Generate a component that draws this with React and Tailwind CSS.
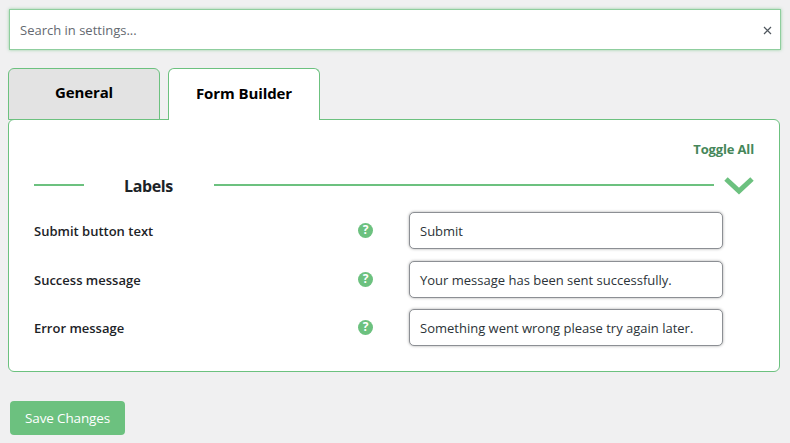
import React from "react";

const fontFamily = "font-['Open_Sans','Noto_Sans',sans-serif]";

const rows = [
  { label: "Submit button text", value: "Submit", gap: "mb-3" },
  { label: "Success message", value: "Your message has been sent successfully.", gap: "mb-[11px]" },
  { label: "Error message", value: "Something went wrong please try again later.", gap: "" },
];

const HelpIcon = () => (
  <span className="flex h-[15px] w-[15px] items-center justify-center rounded-full bg-[#6cc17f] text-[12px] font-bold leading-none text-white">
    ?
  </span>
);

const SettingRow = ({ label, value, gap }) => (
  <div className={`flex h-[37px] items-center ${gap}`}>
    <div className="w-[324px] pt-[4px] text-[13px] font-semibold text-[#1d2327]">{label}</div>
    <HelpIcon />
    <div className="ml-[36px] flex h-[37px] w-[314px] items-center rounded-[5px] border border-[#8c8f94] bg-white px-[10px] pt-[4px] text-[13px] text-[#2c3338] shadow-[0_0_3px_rgba(0,0,0,0.35)]">
      {value}
    </div>
  </div>
);

export default function App() {
  return (
    <div className={`h-[443px] w-[790px] overflow-hidden bg-[#f0f0f1] pl-2 pr-[10px] pt-[9px] ${fontFamily}`}>
      {/* Search */}
      <div className="ml-px flex h-[41px] w-[772px] items-center justify-between border border-[#8fce9e] bg-white pl-[10px] pr-2 shadow-[0_0_3px_rgba(108,193,127,0.7)]">
        <span className="pt-[3px] text-[13px] text-[#646970]">Search in settings...</span>
        <svg width="9" height="9" viewBox="0 0 9 9" className="mt-px text-[#50575e]">
          <path d="M1 1l7 7M8 1L1 8" stroke="currentColor" strokeWidth="1.2" fill="none" />
        </svg>
      </div>

      {/* Tabs */}
      <div className="relative z-10 mt-[18px] flex h-[52px] gap-2">
        <div className="flex h-[52px] w-[152px] items-center justify-center rounded-t-[6px] border border-[#6cc17f] bg-[#e3e3e3] pb-[3px] text-[15px] font-bold tracking-[-0.1px] text-black">
          General
        </div>
        <div className="flex h-[52px] w-[152px] items-center justify-center rounded-t-[6px] border border-b-0 border-[#6cc17f] bg-white pb-[3px] text-[15px] font-bold tracking-[-0.1px] text-black">
          Form Builder
        </div>
      </div>

      {/* Panel */}
      <div className="-mt-px h-[253px] w-[772px] rounded-[6px] border border-[#6cc17f] bg-white pl-[25px] pr-[25px] pt-[20px]">
        <div className="text-right text-[13px] font-bold tracking-[-0.15px] text-[#46875a]">Toggle All</div>
        <div className="mt-[12px] flex h-[26px] items-center">
          <div className="h-[2px] w-[50px] bg-[#6cc17f]" />
          <div className="ml-10 w-[50px] pt-[3px] text-[16px] font-bold tracking-[-0.4px] text-[#1d2327]">Labels</div>
          <div className="ml-10 h-[2px] w-[500px] bg-[#6cc17f]" />
          <svg width="30" height="20" viewBox="0 0 30 20" className="ml-[10px]">
            <path d="M2 4l13 12L28 4" stroke="#6cc17f" strokeWidth="5" fill="none" />
          </svg>
        </div>
        <div className="mt-[14px]">
          {rows.map((row) => (
            <SettingRow key={row.label} {...row} />
          ))}
        </div>
      </div>

      {/* Save */}
      <button className="ml-[2px] mt-[29px] flex h-[34px] w-[115px] items-center justify-center rounded-[4px] bg-[#6cc17f] pt-[1px] text-[13.5px] tracking-[-0.15px] text-white">
        Save Changes
      </button>
    </div>
  );
}
